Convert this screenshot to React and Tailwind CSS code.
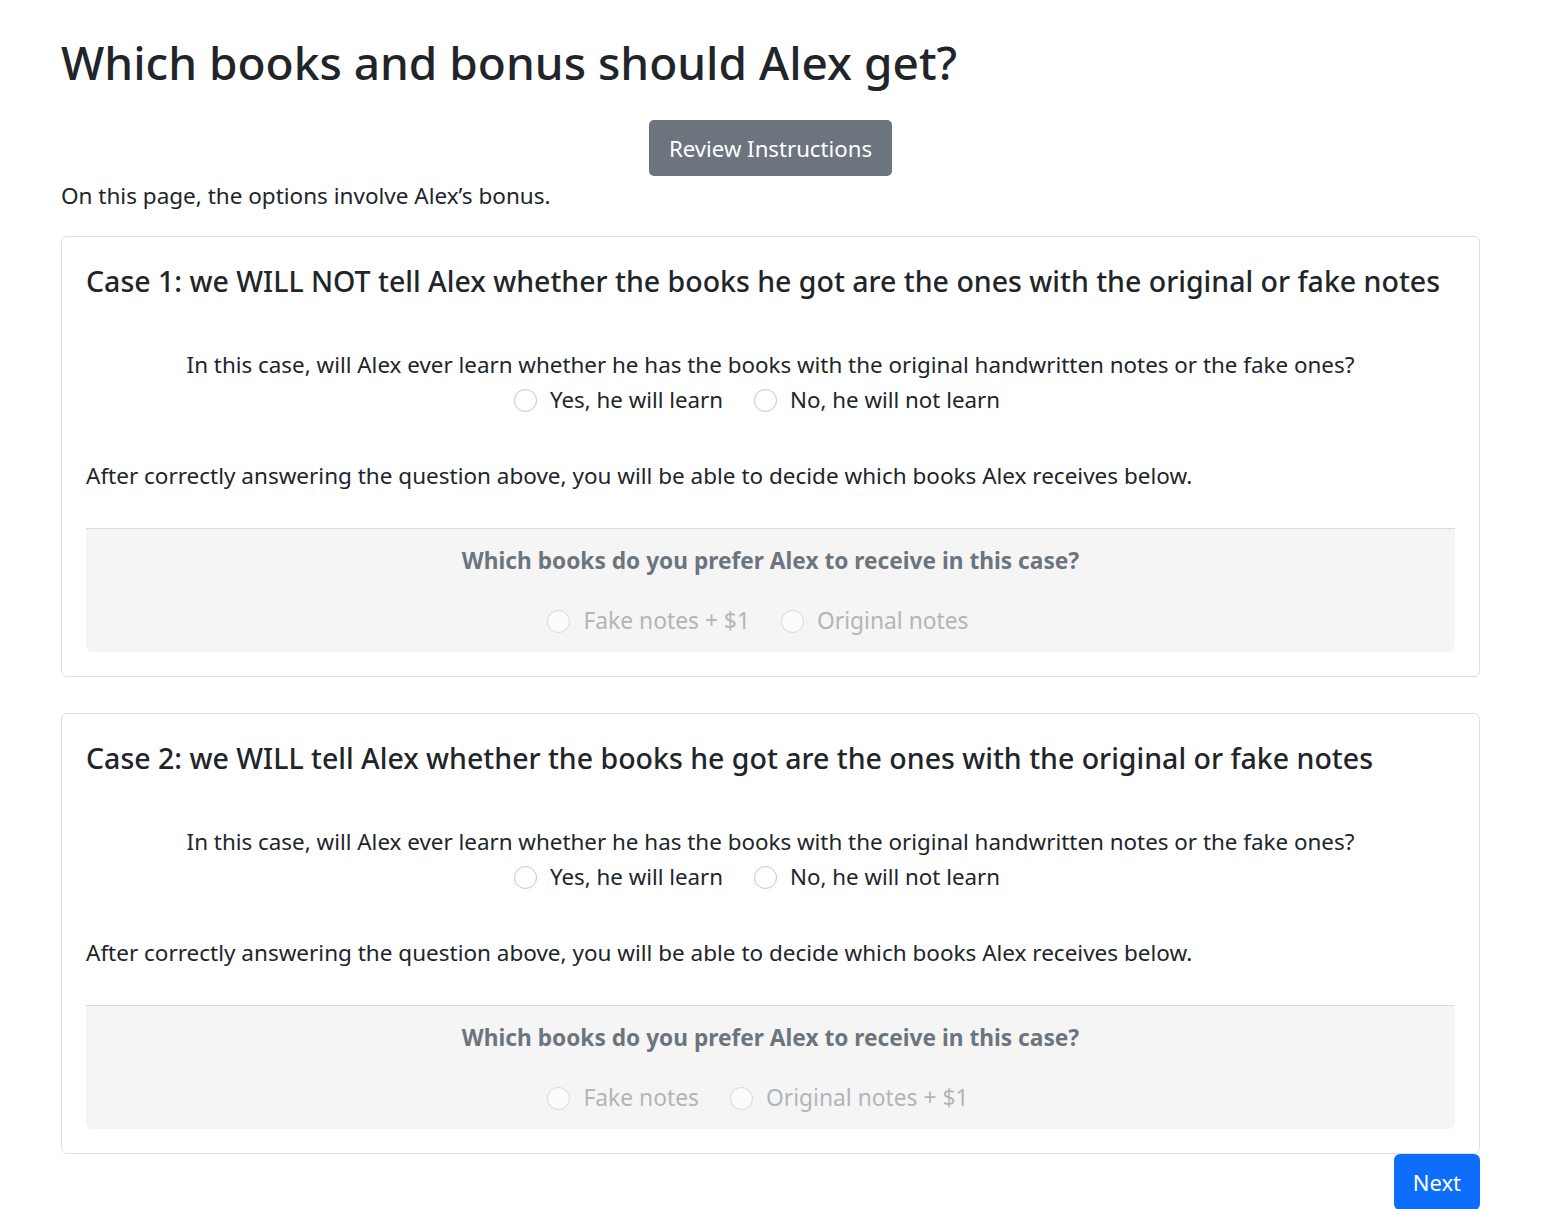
import React from "react";

const font = { fontFamily: '"Noto Sans", "Open Sans", sans-serif' };

function Radio({ label, disabled }) {
  return (
    <label className={`flex items-center mr-[31px] ${disabled ? "text-[#b1b5b9]" : "text-[#212529]"}`}>
      <span
        className={`inline-block w-[23px] h-[23px] rounded-full border mr-[13px] ${
          disabled ? "border-[#d9d9d9] bg-[#fcfcfc]" : "border-[#c4c4c4] bg-white"
        }`}
      />
      <span>{label}</span>
    </label>
  );
}

function Card({ title, opts, className }) {
  return (
    <div className={`border border-[#dfdfdf] rounded-[6px] px-6 pt-[27px] pb-6 ${className}`}>
      <h4 className="text-[28.5px] leading-[34px] font-medium text-[#212529] whitespace-nowrap">{title}</h4>
      <p className="mt-[52px] text-center text-[22.4px] leading-[30px] text-[#212529] whitespace-nowrap">
        In this case, will Alex ever learn whether he has the books with the original handwritten notes or the fake ones?
      </p>
      <div className="mt-[2px] h-[36px] flex justify-center items-center text-[22.3px] pl-[4px]">
        <Radio label="Yes, he will learn" />
        <Radio label="No, he will not learn" />
      </div>
      <p className="mt-[43px] text-[22.5px] leading-[30px] text-[#212529] whitespace-nowrap">
        After correctly answering the question above, you will be able to decide which books Alex receives below.
      </p>
      <div className="mt-[37px] border-t border-[#dcdcdc] bg-[#f5f5f5] rounded-b-[6px] pt-[16px] pb-[13px]">
        <div className="text-center text-[22.7px] leading-[32px] font-bold text-[#6c757d]">
          Which books do you prefer Alex to receive in this case?
        </div>
        <div className="mt-[26px] h-[36px] flex justify-center items-center text-[22.8px] pl-[6px]">
          <Radio label={opts[0]} disabled />
          <Radio label={opts[1]} disabled />
        </div>
      </div>
    </div>
  );
}

export default function App() {
  return (
    <div className="bg-white min-h-[1209px] overflow-hidden" style={font}>
      <div className="w-[1419px] ml-[61px]">
        <h1 className="pt-[34px] text-[46px] leading-[56px] font-medium text-[#212529] whitespace-nowrap">
          Which books and bonus should Alex get?
        </h1>
        <div className="mt-[30px] flex justify-center">
          <button className="h-[56px] px-[20px] pt-[2px] rounded-[5px] bg-[#6c757d] text-white text-[22.2px]">
            Review Instructions
          </button>
        </div>
        <p className="mt-[5px] text-[22.5px] leading-[30px] text-[#212529]">
          On this page, the options involve Alex’s bonus.
        </p>
        <Card
          className="mt-[25px]"
          title="Case 1: we WILL NOT tell Alex whether the books he got are the ones with the original or fake notes"
          opts={["Fake notes + $1", "Original notes"]}
        />
        <Card
          className="mt-[36px]"
          title="Case 2: we WILL tell Alex whether the books he got are the ones with the original or fake notes"
          opts={["Fake notes", "Original notes + $1"]}
        />
        <div className="flex justify-end">
          <button className="h-[56px] px-[19px] pt-[1px] rounded-[6px] bg-[#0d6efd] text-white text-[22px]">Next</button>
        </div>
      </div>
    </div>
  );
}
